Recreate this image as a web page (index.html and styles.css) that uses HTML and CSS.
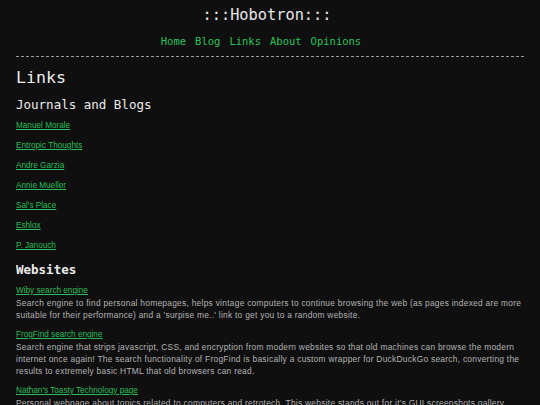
FILE: index.html
```html
<!DOCTYPE html>
<html>
<head>
<meta charset="utf-8">
<title>Links - Hobotron</title>
<link rel="stylesheet" href="styles.css">
</head>
<body>
<header class="site-header">
  <div class="logo">:::Hobotron:::</div>
  <nav class="nav">
    <a href="#">Home</a>
    <a href="#">Blog</a>
    <a href="#">Links</a>
    <a href="#">About</a>
    <a href="#">Opinions</a>
  </nav>
</header>
<main class="content">
  <h1 class="page-title">Links</h1>
  <h2 class="section-title">Journals and Blogs</h2>
  <ul class="link-list">
    <li><a href="#">Manuel Morale</a></li>
    <li><a href="#">Entropic Thoughts</a></li>
    <li><a href="#">Andre Garzia</a></li>
    <li><a href="#">Annie Mueller</a></li>
    <li><a href="#">Sal's Place</a></li>
    <li><a href="#">Eshlox</a></li>
    <li><a href="#">P. Janouch</a></li>
  </ul>
  <h2 class="section-title section-sites">Websites</h2>
  <div class="site-list">
    <div class="site">
      <a href="#">Wiby search engine</a>
      <p>Search engine to find personal homepages, helps vintage computers to continue browsing the web (as pages indexed are more suitable for their performance) and a 'surpise me..' link to get you to a random website.</p>
    </div>
    <div class="site">
      <a href="#">FrogFind search engine</a>
      <p>Search engine that strips javascript, CSS, and encryption from modern websites so that old machines can browse the modern internet once again! The search functionality of FrogFind is basically a custom wrapper for DuckDuckGo search, converting the results to extremely basic HTML that old browsers can read.</p>
    </div>
    <div class="site">
      <a href="#">Nathan's Toasty Technology page</a>
      <p>Personal webpage about topics related to computers and retrotech. This website stands out for it's GUI screenshots gallery containing many operating systems and their interfaces throughout history.</p>
    </div>
  </div>
</main>
</body>
</html>
```
FILE: styles.css
```css
html, body {
  background: #0f0f0f;
}
body {
  margin: 0 16px;
  color: #b4b4b4;
  font-family: "Liberation Sans", Arial, sans-serif;
  font-size: 8.2px;
}
a {
  color: #2ebd59;
}
.site-header {
  padding-top: 5px;
  padding-bottom: 7px;
  border-bottom: 1px dashed #9a9a9a;
  text-align: center;
}
.logo {
  padding-right: 6px;
  font-family: "DejaVu Sans Mono", monospace;
  font-size: 15.3px;
  line-height: 20px;
  color: #e8e8e8;
}
.nav {
  margin-top: 8px;
  padding-right: 18px;
  display: flex;
  justify-content: center;
  gap: 9px;
  font-family: "DejaVu Sans Mono", monospace;
  font-size: 10.5px;
  line-height: 16px;
}
.nav a {
  text-decoration: none;
  color: #2dc35c;
}
.content {
  padding-top: 10px;
}
.page-title {
  margin: 0;
  font-family: "DejaVu Sans Mono", monospace;
  font-weight: normal;
  font-size: 16.6px;
  line-height: 22px;
  color: #ececec;
}
.section-title {
  margin: 7px 0 0;
  font-family: "DejaVu Sans Mono", monospace;
  font-weight: normal;
  font-size: 12.5px;
  line-height: 18px;
  color: #ececec;
}
.section-sites {
  margin-top: 9px;
  font-weight: bold;
}
.link-list {
  list-style: none;
  margin: 6px 0 0;
  padding: 0;
  display: flex;
  flex-direction: column;
  gap: 8px;
}
.link-list li {
  line-height: 12px;
}
.site-list {
  margin-top: 6px;
  display: flex;
  flex-direction: column;
  gap: 8px;
}
.site a {
  display: block;
  line-height: 12px;
}
.site p {
  margin: 0;
  line-height: 12px;
  font-size: 8.4px;
  letter-spacing: 0.27px;
}
```
